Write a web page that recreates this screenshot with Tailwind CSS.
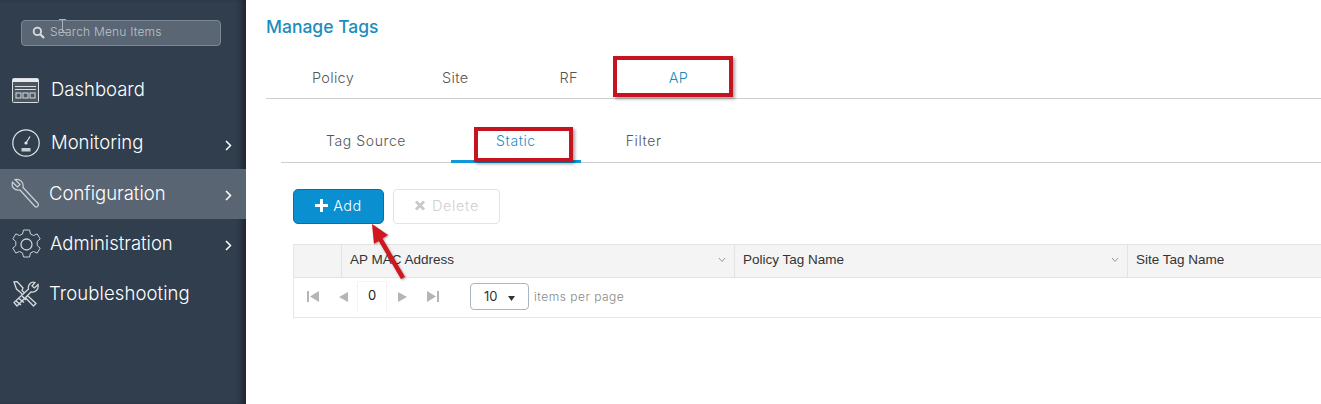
<!DOCTYPE html>
<html lang="en">
<head>
  <meta charset="UTF-8">
  <script src="https://cdn.jsdelivr.net/npm/@tailwindcss/browser@4"></script>
  <title>Manage Tags</title>
</head>
<body class="bg-white overflow-hidden font-['Inter',sans-serif]">
  <div class="relative flex w-[1321px] h-[404px] overflow-hidden">

    <!-- Sidebar -->
    <aside class="w-[246px] h-full shrink-0 bg-[#303e4e] shadow-[inset_-7px_0_6px_-3px_rgba(0,0,0,0.4)] pt-[20px] font-light text-white">
      <div class="ml-[21px] w-[200px] h-[26px] flex items-center pl-[10px] pb-[2px] rounded-[4px] border border-[#7b8896] bg-[#5a6674]">
        <svg class="w-[13px] h-[13px] text-[#d5dade]" viewBox="0 0 14 14" fill="none" stroke="currentColor"><circle cx="5.8" cy="5.8" r="4" stroke-width="2"/><path d="M8.8 8.8 13 13" stroke-width="2.4"/></svg>
        <span class="ml-[5px] text-[12px] tracking-[0.2px] text-[#bcc4cb]">Search Menu Items</span>
      </div>

      <nav class="mt-[19px]">
        <a class="flex items-center h-[50px] pl-[12px] text-[18.5px]">
          <svg class="w-[27px] h-[25px] shrink-0 text-[#d9dde0]" viewBox="0 0 27 25" fill="none" stroke="currentColor"><rect x="0.5" y="0.5" width="26" height="24" rx="1" fill="#4b5663"/><rect x="1" y="1" width="25" height="3" fill="#e8eaec" stroke="none"/><path d="M3 8.5h21M3 11.5h21"/><rect x="4" y="15" width="5" height="5"/><rect x="11" y="15" width="5" height="5"/><rect x="18" y="15" width="5" height="5"/></svg>
          <span class="ml-[12px]">Dashboard</span>
        </a>
        <a class="relative flex items-center h-[52px] mt-[2px] pl-[12px] text-[18.5px]">
          <svg class="w-[28px] h-[28px] shrink-0 text-[#e4e7e9]" viewBox="0 0 28 28" fill="none" stroke="currentColor"><circle cx="14" cy="14" r="13.2" stroke-width="1.2"/><rect x="9.5" y="19" width="9" height="3.5" fill="#c9ced3" stroke="none"/><path d="m14 14 4-6.5" stroke-width="1.2"/><circle cx="14" cy="14" r="1.6" fill="currentColor" stroke="none"/></svg>
          <span class="ml-[11px]">Monitoring</span>
          <svg class="absolute left-[225px] top-[23px] w-[7px] h-[11px] text-white" viewBox="0 0 7 11" fill="none" stroke="currentColor" stroke-width="1.5"><path d="m1 1 4.5 4.5L1 10"/></svg>
        </a>
        <a class="relative flex items-center h-[50px] pl-[11px] text-[18.5px] bg-[#596573]">
          <svg class="w-[30px] h-[32px] shrink-0 text-[#ccd1d6]" viewBox="0 0 30 32" fill="none" stroke="currentColor" stroke-width="1.2"><path d="M4 1.5 9 6.5 6.5 9 1.5 4.2C0 9 3.5 13 9 12l15 16.5c1.5 1.5 4.5-1 3-3L12 9.5C13 4 9 .5 4 1.5Z"/></svg>
          <span class="ml-[8px]">Configuration</span>
          <svg class="absolute left-[225px] top-[21px] w-[7px] h-[11px] text-white" viewBox="0 0 7 11" fill="none" stroke="currentColor" stroke-width="1.5"><path d="m1 1 4.5 4.5L1 10"/></svg>
        </a>
        <a class="relative flex items-center h-[50px] pl-[11px] text-[18.5px]">
          <svg class="w-[31px] h-[31px] shrink-0 text-[#ccd1d6]" viewBox="0 0 31 31" fill="none" stroke="currentColor" stroke-width="1"><path d="M12.5 1h6l1 4 3 1.5 3.7-1.6 3 5-3 2.6v4l3 2.6-3 5-3.7-1.6-3 1.5-1 4h-6l-1-4-3-1.5-3.7 1.6-3-5 3-2.6v-4l-3-2.6 3-5 3.7 1.6 3-1.5z"/><circle cx="15.5" cy="15.5" r="5.5" stroke-width="1.3"/></svg>
          <span class="ml-[8px]">Administration</span>
          <svg class="absolute left-[225px] top-[21px] w-[7px] h-[11px] text-white" viewBox="0 0 7 11" fill="none" stroke="currentColor" stroke-width="1.5"><path d="m1 1 4.5 4.5L1 10"/></svg>
        </a>
        <a class="flex items-center h-[50px] pl-[12px] text-[18.5px]">
          <svg class="w-[28px] h-[26px] shrink-0 text-[#d5d9dc]" viewBox="0 0 28 26" fill="none" stroke="currentColor" stroke-width="1.3"><path d="M2 1 5 .5 11 7l-1 2.5 14 13-2.5 2.5L8 11 4.5 8z"/><path d="M26 3.5 22.5 7 20 5l3-3.5C19 0 15.5 4 16.5 8L2 21.5 5 25l14-14c4.5 1 8-3 7-7.5Z" fill="#303e4e"/><path d="m4 20 5 4M7 17.5l5 4M10 15l4 4" stroke-width="1.6"/></svg>
          <span class="ml-[9px] tracking-[0.1px]">Troubleshooting</span>
        </a>
      </nav>
    </aside>

    <!-- Main -->
    <main class="flex-1 min-w-0 pl-[20px] pt-[16px]">
      <h1 class="text-[17.5px] leading-[22px] font-medium text-[#1b8dbd]">Manage Tags</h1>

      <div class="mt-[16px] h-[45px] flex items-center pt-[3px] border-b border-[#cfcfcf] pl-[1px] text-[14.5px] tracking-[0.3px] font-light text-[#555]">
        <span class="px-[45px]">Policy</span>
        <span class="pl-[43px] pr-[45px]">Site</span>
        <span class="pl-[46px] pr-[45px]">RF</span>
        <span class="px-[46px] text-[#1b8dbd]">AP</span>
      </div>

      <div class="ml-[15px] mt-[20px] h-[44px] flex items-stretch border-b border-[#cfcfcf] text-[14px] tracking-[0.6px] font-light text-[#555]">
        <span class="px-[45px] flex items-center">Tag Source</span>
        <span class="px-[45px] flex items-center pt-[2px] text-[#1b8dbd] border-b-[3px] border-[#0f97d8] -mb-px">Static</span>
        <span class="px-[45px] flex items-center">Filter</span>
      </div>

      <div class="ml-[27px] mt-[26px]">
        <div class="flex gap-[9px]">
          <button class="w-[91px] h-[35px] flex items-center justify-center gap-[5px] pb-[2px] rounded-[5px] bg-[#0a8fd1] border border-[#0a6fa3] text-[14.5px] tracking-[0.5px] font-light text-white">
            <svg class="w-[13px] h-[13px]" viewBox="0 0 13 13" fill="white"><path d="M5 0h3v5h5v3H8v5H5V8H0V5h5z"/></svg>
            Add
          </button>
          <button class="w-[107px] h-[35px] flex items-center justify-center gap-[6px] pb-[2px] rounded-[4px] border border-[#e3e3e3] text-[14.5px] tracking-[0.6px] font-light text-[#d0d0d0]">
            <svg class="w-[12px] h-[11px]" viewBox="0 0 11 11" fill="#c9c9c9"><path d="M2.5.5 5.5 3.5 8.5.5l2 2-3 3 3 3-2 2-3-3-3 3-2-2 3-3-3-3z"/></svg>
            Delete
          </button>
        </div>

        <div class="mt-[20px] border-l border-[#e6e6e6]">
          <div class="flex h-[34px] bg-[#f4f4f4] border-y border-[#e3e3e3] text-[13.5px] text-[#333] font-['Liberation_Sans',sans-serif]">
            <div class="w-[48px] border-r border-[#e3e3e3]"></div>
            <div class="relative w-[393px] border-r border-[#e3e3e3] pl-[8px] flex items-center pb-[2px]">AP MAC Address
              <svg class="absolute right-[8px] top-[12px] w-[8px] h-[6px] text-[#999]" viewBox="0 0 8 6" fill="none" stroke="currentColor"><path d="m1 1 3 3.5L7 1"/></svg>
            </div>
            <div class="relative w-[393px] border-r border-[#e3e3e3] pl-[8px] flex items-center pb-[2px]">Policy Tag Name
              <svg class="absolute right-[8px] top-[12px] w-[8px] h-[6px] text-[#999]" viewBox="0 0 8 6" fill="none" stroke="currentColor"><path d="m1 1 3 3.5L7 1"/></svg>
            </div>
            <div class="pl-[8px] flex items-center pb-[2px]">Site Tag Name</div>
          </div>

          <div class="flex items-center h-[40px] pb-[2px] border-b border-[#e6e6e6] pl-[13px]">
            <svg class="w-[12px] h-[11px] text-[#b5b5b5]" viewBox="0 0 12 11" fill="currentColor"><path d="M0 0h2v11H0zM12 0v11L3 5.5z"/></svg>
            <svg class="ml-[20px] w-[9px] h-[10px] text-[#b5b5b5]" viewBox="0 0 9 10" fill="currentColor"><path d="M9 0v10L0 5z"/></svg>
            <span class="ml-[9px] w-[30px] h-[32px] flex items-center justify-center pb-[3px] text-[13px] text-[#222] border-x border-t border-[#f3f3f3]">0</span>
            <svg class="ml-[11px] w-[9px] h-[10px] text-[#b5b5b5]" viewBox="0 0 9 10" fill="currentColor"><path d="M0 0v10l9-5z"/></svg>
            <svg class="ml-[20px] w-[12px] h-[11px] text-[#b5b5b5]" viewBox="0 0 12 11" fill="currentColor"><path d="M10 0h2v11h-2zM0 0v11l9-5.5z"/></svg>
            <div class="ml-[31px] w-[59px] h-[27px] flex items-center justify-between px-[13px] rounded-[4px] border border-[#a9b5c0] text-[13px] text-[#333]">
              10
              <svg class="w-[7px] h-[5px] mt-[3px] text-[#333]" viewBox="0 0 7 5" fill="currentColor"><path d="M0 0h7L3.5 5z"/></svg>
            </div>
            <span class="ml-[5px] text-[12px] tracking-[0.5px] font-light text-[#888]">items per page</span>
          </div>
        </div>
      </div>
    </main>

    <!-- Annotations drawn over the screenshot -->
    <div class="absolute left-[613px] top-[56px] w-[120px] h-[41px] border-[4px] border-[#c5141f] shadow-[2px_2px_3px_rgba(0,0,0,0.35)]"></div>
    <div class="absolute left-[474px] top-[127px] w-[99px] h-[35px] border-[4px] border-[#c5141f] shadow-[2px_2px_3px_rgba(0,0,0,0.35)]"></div>
    <svg class="absolute left-[365px] top-[220px] w-[45px] h-[65px] drop-shadow-[1px_1px_1px_rgba(0,0,0,0.35)]" viewBox="0 0 45 65">
      <path d="M38 58 14 17" stroke="#d0161f" stroke-width="4.5" fill="none"/>
      <path d="M7 4 23 15 9 24z" fill="#d0161f"/>
    </svg>
    <!-- text cursor over the search box -->
    <svg class="absolute left-[59px] top-[19px] w-[7px] h-[14px] text-[#aab2ba]" viewBox="0 0 7 14" fill="none" stroke="currentColor"><path d="M0 .5h7M3.5.5v13M0 13.5h7"/></svg>
  </div>
</body>
</html>
